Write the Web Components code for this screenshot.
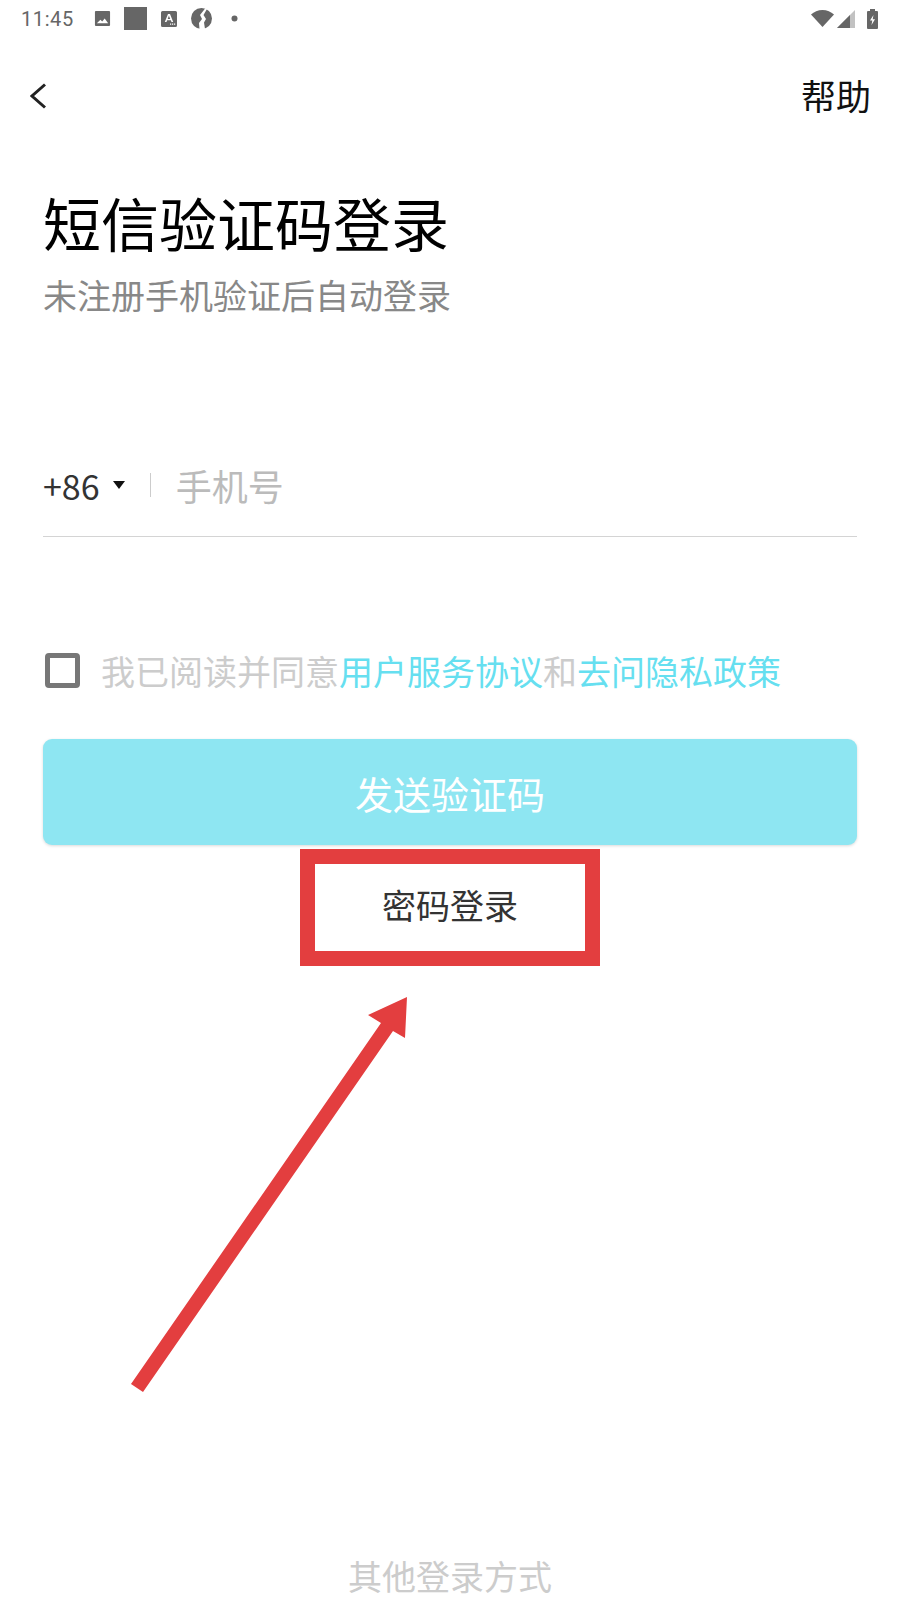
<!DOCTYPE html>
<html lang="zh-CN">
<head>
<meta charset="utf-8">
<title>短信验证码登录</title>
<style>
  html, body { margin: 0; padding: 0; background: #fff; }
  body { font-family: "Noto Sans CJK SC", "Noto Sans", sans-serif; width: 900px; height: 1600px; overflow: hidden; }
</style>
</head>
<body>
<login-page>
  <status-bar></status-bar>
  <nav-bar>帮助</nav-bar>
  <page-heading title-text="短信验证码登录">未注册手机验证后自动登录</page-heading>
  <phone-field code="+86" placeholder="手机号"></phone-field>
  <agree-row>我已阅读并同意<a>用户服务协议</a>和<a>去问隐私政策</a></agree-row>
  <send-button>发送验证码</send-button>
  <text-link>密码登录</text-link>
  <other-login>其他登录方式</other-login>
</login-page>
<red-markup></red-markup>

<script>
function define(tag, html) {
  customElements.define(tag, class extends HTMLElement {
    constructor() {
      super();
      this.attachShadow({ mode: 'open' }).innerHTML = html;
    }
    connectedCallback() {
      // attributes go into the matching placeholders
      this.shadowRoot.querySelectorAll('[data-attr]').forEach((el) => {
        el.textContent = this.getAttribute(el.dataset.attr) || '';
      });
    }
  });
}

define('login-page', `<style>
  :host { display: flex; flex-direction: column; height: 1600px; }
</style><slot></slot>`);

define('status-bar', `<style>
  :host { display: flex; align-items: center; height: 37px; padding: 0 22px 0 21px; color: #666; font: 20px Roboto, sans-serif; letter-spacing: .6px; }
  svg { display: block; flex: none; fill: #666; }
  .time { width: 53px; margin-right: 20px; }
  .end { margin-left: auto; display: flex; align-items: center; }
</style>
<span class="time">11:45</span>
<svg width="17" height="17" viewBox="0 0 18 18" style="margin-right:13px"><path fill-rule="evenodd" d="M2 1h14a1 1 0 0 1 1 1v14a1 1 0 0 1-1 1H2a1 1 0 0 1-1-1V2a1 1 0 0 1 1-1zM3 14h12l-3.700-5-2.600 3.200-1.900-2z"/></svg>
<svg width="23" height="23" viewBox="0 0 23 23" style="margin-right:14px"><rect width="23" height="23"/></svg>
<svg width="16" height="16" viewBox="0 0 16 16" style="margin-right:14px"><path fill-rule="evenodd" d="M1.500 0h13A1.500 1.500 0 0 1 16 1.500v13a1.500 1.500 0 0 1-1.500 1.500h-13A1.500 1.500 0 0 1 0 14.500v-13A1.500 1.500 0 0 1 1.500 0zM7 3 3.800 11h1.700l.6-1.700h3.800l.6 1.700h1.700L9 3zm.9 1.800 1.300 3.200H6.700zM9 12.500h1.200v1.200H9zm2 0h1.200v1.200H11zm2 0h1.200v1.200H13z"/></svg>
<svg width="21" height="21" viewBox="0 0 21 21" style="margin-right:19px"><circle cx="10.500" cy="10.500" r="10.500"/><path fill="#fff" d="M14.500 0 16 1 12.500 7l2.500 4-2 3.500 1 6.500H8.500L8 15l3-4-2-4z"/></svg>
<svg width="7" height="7" viewBox="0 0 7 7"><circle cx="3.500" cy="3.500" r="3"/></svg>
<span class="end">
  <svg width="23" height="17" viewBox="0 0 23 17" style="margin-right:3px"><path d="M0 4.500C3 1.800 7 0 11.500 0S20 1.800 23 4.500L11.500 17z"/></svg>
  <svg width="18" height="18" viewBox="0 0 18 18" style="margin-right:12px"><path d="M18 0v18H0z" opacity=".4"/><path d="M13 5v13H0z"/></svg>
  <svg width="11" height="20" viewBox="0 0 11 20"><path fill-rule="evenodd" d="M3 0h5v2h2a1 1 0 0 1 1 1v16a1 1 0 0 1-1 1H1a1 1 0 0 1-1-1V3a1 1 0 0 1 1-1h2zM6.500 6 3 11.500h2.300L4.500 16 8 10.300H5.700z"/></svg>
</span>`);

define('nav-bar', `<style>
  :host { display: flex; align-items: center; justify-content: space-between; height: 118px; padding: 0 29px 0 30px; font-size: 35px; color: #111; }
  svg { display: block; }
  span { margin-bottom: 4px; }
</style>
<svg width="16" height="26" viewBox="0 0 16 26" fill="none" stroke="#222" stroke-width="3"><path d="M15 1.500 2 13l13 11.500"/></svg>
<span><slot></slot></span>`);

define('page-heading', `<style>
  :host { display: block; padding: 0 43px; margin-top: 27px; }
  h1 { margin: 0; font-size: 58px; line-height: 80px; font-weight: 400; color: #000; }
  p { margin: 8px 0 0; font-size: 34px; line-height: 50px; color: #888; }
</style>
<h1 data-attr="title-text"></h1>
<p><slot></slot></p>`);

define('phone-field', `<style>
  :host { display: flex; align-items: center; height: 70px; margin: 130px 43px 0; padding-bottom: 16px; border-bottom: 1px solid #d4d4d4; }
  .code { font-size: 34px; color: #333; }
  .caret { width: 0; height: 0; margin: 0 25px 0 13px; border: 6.500px solid transparent; border-top: 8px solid #111; border-bottom: 0; }
  .sep { width: 1px; height: 24px; background: #ccc; margin-right: 25px; }
  .ph { font-size: 36px; color: #bbb; }
</style>
<span class="code" data-attr="code"></span><i class="caret"></i><i class="sep"></i><span class="ph" data-attr="placeholder"></span>`);

define('agree-row', `<style>
  :host { display: flex; align-items: center; margin: 98px 43px 0 45px; height: 70px; font-size: 34px; color: #ccc; white-space: nowrap; }
  .box { flex: none; box-sizing: border-box; width: 35px; height: 35px; border: 5px solid #777; border-radius: 4px; margin-right: 21px; }
  ::slotted(a) { color: #66dff0; }
</style>
<i class="box"></i><span><slot></slot></span>`);

define('send-button', `<style>
  :host { display: flex; align-items: center; justify-content: center; height: 106px; margin: 34px 43px 0; border-radius: 9px; background: #8ee6f2; color: #fff; font-size: 38px; box-shadow: 0 1px 3px rgba(0,0,0,.15); }
</style><slot></slot>`);

define('text-link', `<style>
  :host { display: block; margin-top: 35px; text-align: center; font-size: 34px; line-height: 50px; color: #333; }
</style><slot></slot>`);

define('other-login', `<style>
  :host { display: block; margin-top: auto; text-align: center; font-size: 34px; line-height: 50px; height: 49px; color: #ccc; }
</style><slot></slot>`);

// annotation drawn over the screenshot
define('red-markup', `<style>
  :host { position: absolute; left: 0; top: 0; width: 900px; height: 1600px; pointer-events: none; }
  svg { display: block; }
</style>
<svg width="900" height="1600" viewBox="0 0 900 1600">
  <rect x="307.500" y="856.500" width="285" height="102" fill="none" stroke="#e33e3f" stroke-width="15"/>
  <path fill="#e33e3f" d="M407 997 368 1015 381 1023 131 1384 143 1392 393 1031 405 1038z"/>
</svg>`);
</script>
</body>
</html>
